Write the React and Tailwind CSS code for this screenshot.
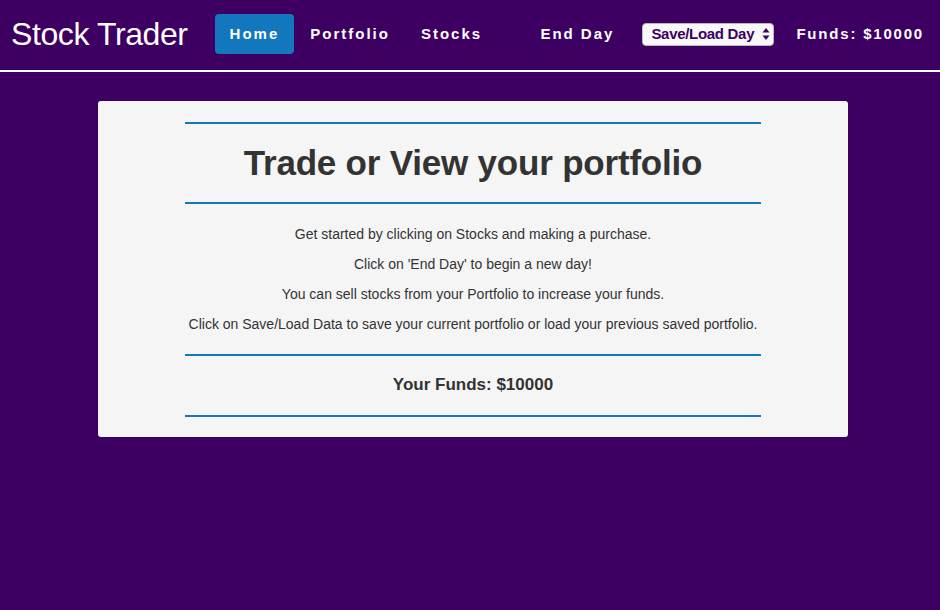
const NAV_LINKS = [
  { label: "Home", active: true },
  { label: "Portfolio" },
  { label: "Stocks" },
];

const TIPS = [
  "Get started by clicking on Stocks and making a purchase.",
  "Click on 'End Day' to begin a new day!",
  "You can sell stocks from your Portfolio to increase your funds.",
  "Click on Save/Load Data to save your current portfolio or load your previous saved portfolio.",
];

function NavLink({ label, active }) {
  return (
    <a
      href="#"
      className={`flex h-[40px] items-center rounded px-[15px] text-[15px] font-bold tracking-[2px] text-white ${
        active ? "bg-[#1277bd]" : ""
      }`}
    >
      {label}
    </a>
  );
}

function SaveLoadSelect() {
  return (
    <div className="flex h-[23px] w-[132px] items-center justify-between rounded-[4px] border border-[#b9b9b9] bg-[#f8f8f8] pl-[8px] pr-[3px] text-[15px] font-bold text-[#3d0062]">
      <span className="tracking-[-0.3px]">Save/Load Day</span>
      <svg width="8" height="14" viewBox="0 0 8 14">
        <path d="M4 1 L7.5 5.5 L0.5 5.5 Z" fill="#3d0062" />
        <path d="M4 13 L7.5 8.5 L0.5 8.5 Z" fill="#3d0062" />
      </svg>
    </div>
  );
}

function Header() {
  return (
    <header className="flex h-[72px] items-center border-b-2 border-white pb-[2px] pl-[11px] pr-[16px]">
      <h1 className="mr-[27px] text-[32px] leading-none tracking-[-0.4px] text-white">
        Stock Trader
      </h1>

      <nav className="flex items-center gap-[1px]">
        {NAV_LINKS.map((link) => (
          <NavLink key={link.label} {...link} />
        ))}
      </nav>

      <div className="ml-auto flex items-center">
        <a
          href="#"
          className="mr-[28px] text-[15px] font-bold tracking-[2px] text-white"
        >
          End Day
        </a>

        <SaveLoadSelect />

        <span className="ml-[22px] text-[15px] font-bold tracking-[1.8px] text-white">
          Funds: $10000
        </span>
      </div>
    </header>
  );
}

function BlueRule() {
  return <div className="h-[2px] bg-[#1277bd]" />;
}

export default function App() {
  return (
    <div className="min-h-[610px] bg-[#3d0062] font-['Liberation_Sans',Arial,sans-serif]">
      <Header />

      <main className="ml-[98px] mt-[29px] w-[750px] rounded-[3px] bg-[#f5f5f5] px-[87px] pb-[20px] pt-[21px] text-center text-[#333]">
        <BlueRule />

        <h2 className="py-[19px] text-[35px] leading-[40px] font-bold tracking-[-0.2px]">
          Trade or View your portfolio
        </h2>

        <BlueRule />

        <div className="flex flex-col gap-[10px] py-[20px]">
          {TIPS.map((tip) => (
            <p key={tip} className="whitespace-nowrap text-[14px] leading-[20px]">
              {tip}
            </p>
          ))}
        </div>

        <BlueRule />

        <p className="pb-[18px] pt-[17px] text-[17px] leading-[24px] font-bold">
          Your Funds: $10000
        </p>

        <BlueRule />
      </main>
    </div>
  );
}
